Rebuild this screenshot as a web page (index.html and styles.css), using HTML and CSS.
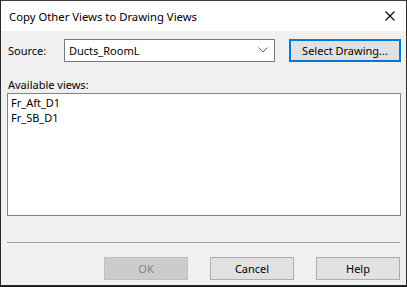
FILE: index.html
```html
<!DOCTYPE html>
<html lang="en">
<head>
    <meta charset="UTF-8">
    <title>Copy Other Views to Drawing Views</title>
    <link rel="stylesheet" href="styles.css">
</head>
<body>
    <div class="window">
        <div class="titlebar">
            <span class="title">Copy Other Views to Drawing Views</span>
            <svg class="close" width="10" height="10" viewBox="0 0 10 10">
                <path d="M0.5 0.5 L9.5 9.5 M9.5 0.5 L0.5 9.5" stroke="#000" stroke-width="1.1" fill="none"/>
            </svg>
        </div>

        <div class="content">
            <div class="source-row">
                <label class="source-label">Source:</label>
                <div class="combo">
                    <span>Ducts_RoomL</span>
                    <svg class="chevron" width="10" height="6" viewBox="0 0 10 6">
                        <path d="M0.5 0.5 L5 5 L9.5 0.5" stroke="#5f5f5f" stroke-width="1" fill="none"/>
                    </svg>
                </div>
                <button class="btn btn-focus">Select Drawing...</button>
            </div>

            <div class="views-label">Available views:</div>
            <ul class="listbox">
                <li>Fr_Aft_D1</li>
                <li>Fr_SB_D1</li>
            </ul>

            <div class="separator"></div>

            <div class="button-row">
                <button class="btn" disabled>OK</button>
                <button class="btn">Cancel</button>
                <button class="btn">Help</button>
            </div>
        </div>
    </div>
</body>
</html>
```

FILE: styles.css
```css
:root {
    --face-color: #f0f0f0;
    --button-color: #e1e1e1;
    --focus-color: #0078d7;
    --text-color: #000000;
}

body {
    margin: 0;
    background-color: #1c1c1c;
    font-family: 'Noto Sans', 'Open Sans', sans-serif;
    font-size: 11px;
    color: var(--text-color);
}

.window {
    width: 405px;
    height: 284px;
    border: 1px solid #2a2a2a;
    border-top-color: #3a3a3a;
    background-color: var(--face-color);
    display: flex;
    flex-direction: column;
}

.titlebar {
    height: 30px;
    background-color: white;
    display: flex;
    align-items: center;
    justify-content: space-between;
    padding: 0 11px 0 8px;
}

.title {
    font-size: 11.3px;
}

.close {
    display: block;
}

.content {
    padding: 7px 5px 0 6px;
    display: flex;
    flex-direction: column;
}

.source-row {
    display: flex;
    align-items: center;
    height: 24px;
}

.source-label {
    width: 56px;
    padding-left: 1px;
}

.combo {
    box-sizing: border-box;
    width: 211px;
    height: 23px;
    border: 1px solid #7a7a7a;
    background-color: white;
    display: flex;
    align-items: center;
    justify-content: space-between;
    padding: 0 6px 0 4px;
}

.chevron {
    display: block;
}

.btn {
    box-sizing: border-box;
    height: 23px;
    width: 84px;
    background-color: var(--button-color);
    border: 1px solid #adadad;
    font-family: inherit;
    font-size: 11px;
    color: var(--text-color);
    padding: 0;
}

.btn-focus {
    width: 112px;
    margin-left: auto;
    border: 2px solid var(--focus-color);
}

.btn:disabled {
    background-color: #cccccc;
    border-color: #bfbfbf;
    color: #838383;
}

.views-label {
    margin-top: 15px;
    height: 16px;
    padding-left: 1px;
}

.listbox {
    box-sizing: border-box;
    list-style: none;
    margin: 0;
    height: 123px;
    border: 1px solid #828282;
    background-color: white;
    padding: 1px 3px;
}

.listbox li {
    line-height: 15px;
}

.separator {
    margin-top: 26px;
    height: 1px;
    background-color: #a0a0a0;
    margin-right: 1px;
}

.button-row {
    margin-top: 14px;
    display: flex;
    justify-content: flex-end;
    gap: 22px;
    padding-right: 1px;
}
```
